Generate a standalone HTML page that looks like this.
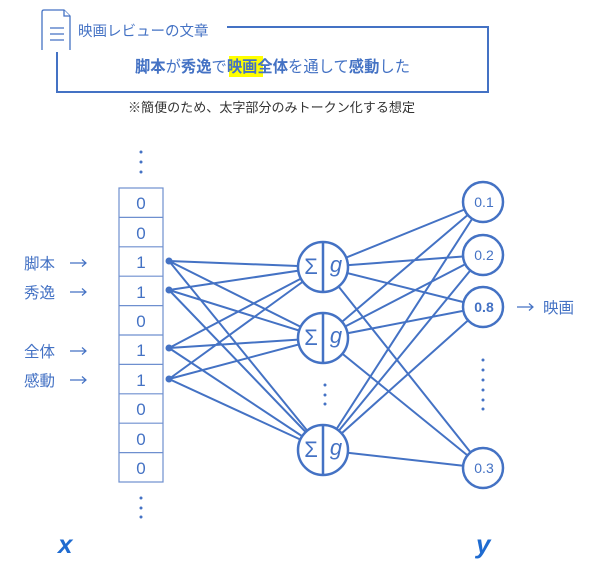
<!DOCTYPE html>
<html><head><meta charset="utf-8"><style>
body{margin:0;background:#fff;width:597px;height:568px;overflow:hidden}
svg{display:block}
text{font-family:"Liberation Sans","Noto Sans CJK JP",sans-serif;fill:#4472C4}
</style></head><body>
<svg width="597" height="568" viewBox="0 0 597 568">
<g fill="none" stroke="#4472C4" stroke-width="2">
<path d="M227 27H488V92H57V52"/>
</g>
<g fill="#fff" stroke="#4472C4" stroke-width="1.3">
<path d="M42 50V12Q42 10 44 10H64L70 16V50"/>
<path d="M64 10V16H70"/>
<path d="M50 28H64M50 34H64M50 40H64" />
</g>
<text x="78" y="36" font-size="14.5">映画レビューの文章</text>
<rect x="229" y="56" width="34" height="21" fill="#FFFF00"/>
<text x="135" y="72" font-size="16" textLength="275" lengthAdjust="spacingAndGlyphs"><tspan font-weight="bold">脚本</tspan>が<tspan font-weight="bold">秀逸</tspan>で<tspan font-weight="bold">映画全体</tspan>を通して<tspan font-weight="bold">感動</tspan>した</text>
<text x="128" y="112" font-size="13" textLength="287" lengthAdjust="spacingAndGlyphs" style="fill:#333">※簡便のため、太字部分のみトークン化する想定</text>

<g fill="none" stroke="#6E8FCF" stroke-width="1.2">
<rect x="119" y="188" width="44" height="294"/>
<path d="M119 217.4H163M119 246.8H163M119 276.2H163M119 305.6H163M119 335H163M119 364.4H163M119 393.8H163M119 423.2H163M119 452.6H163"/>
</g>
<g font-size="17" text-anchor="middle" style="font-family:'DejaVu Sans',sans-serif;font-weight:300">
<text x="141" y="209">0</text><text x="141" y="239">0</text><text x="141" y="268">1</text><text x="141" y="298">1</text><text x="141" y="327">0</text><text x="141" y="356">1</text><text x="141" y="386">1</text><text x="141" y="415">0</text><text x="141" y="445">0</text><text x="141" y="474">0</text>
</g>
<g fill="#4472C4"><circle cx="141" cy="152" r="1.5"/><circle cx="141" cy="162" r="1.5"/><circle cx="141" cy="172" r="1.5"/>
<circle cx="141" cy="498" r="1.5"/><circle cx="141" cy="508" r="1.5"/><circle cx="141" cy="517" r="1.5"/>
<circle cx="325" cy="385" r="1.5"/><circle cx="325" cy="395" r="1.5"/><circle cx="325" cy="404" r="1.5"/>
<circle cx="483" cy="360" r="1.5"/><circle cx="483" cy="370" r="1.5"/><circle cx="483" cy="380" r="1.5"/><circle cx="483" cy="390" r="1.5"/><circle cx="483" cy="400" r="1.5"/><circle cx="483" cy="409" r="1.5"/>
</g>
<g font-size="15.5">
<text x="24" y="269">脚本</text><text x="24" y="298">秀逸</text><text x="24" y="357">全体</text><text x="24" y="386">感動</text>
<text x="543" y="313">映画</text>
</g>
<g stroke="#4472C4" stroke-width="1.2" fill="none">
<path d="M70 263H86M82 259.5L86 263L82 266.5M70 292H86M82 288.5L86 292L82 295.5M70 351H86M82 347.5L86 351L82 354.5M70 380H86M82 376.5L86 380L82 383.5M517 307H533M529 303.5L533 307L529 310.5"/>
</g>

<g stroke="#4472C4" stroke-width="2">
<path d="M169 261L323 267M169 261L323 338M169 261L323 450M169 290L323 267M169 290L323 338M169 290L323 450M169 348L323 267M169 348L323 338M169 348L323 450M169 379L323 267M169 379L323 338M169 379L323 450"/>
<path d="M323 267L483 202M323 267L483 255M323 267L483 307M323 267L483 468M323 338L483 202M323 338L483 255M323 338L483 307M323 338L483 468M323 450L483 202M323 450L483 255M323 450L483 307M323 450L483 468"/>
</g>
<g fill="#4472C4"><circle cx="169" cy="261" r="3.5"/><circle cx="169" cy="290" r="3.5"/><circle cx="169" cy="348" r="3.5"/><circle cx="169" cy="379" r="3.5"/></g>

<g fill="#fff" stroke="#4472C4" stroke-width="2.5">
<circle cx="323" cy="267" r="25"/><circle cx="323" cy="338" r="25"/><circle cx="323" cy="450" r="25"/>
<path d="M323 242V292M323 313V363M323 425V475"/>
<circle cx="483" cy="202" r="20"/><circle cx="483" cy="255" r="20"/><circle cx="483" cy="307" r="20"/><circle cx="483" cy="468" r="20"/>
</g>
<g font-size="22" style="font-family:'Liberation Serif',serif" text-anchor="middle">
<text x="311" y="274">Σ</text><text x="336" y="272" font-style="italic">g</text>
<text x="311" y="345">Σ</text><text x="336" y="343" font-style="italic">g</text>
<text x="311" y="457">Σ</text><text x="336" y="455" font-style="italic">g</text>
</g>
<g font-size="14" text-anchor="middle">
<text x="484" y="207">0.1</text><text x="484" y="260">0.2</text><text x="484" y="312" font-weight="bold">0.8</text><text x="484" y="473">0.3</text>
</g>
<g font-size="26" font-weight="bold" font-style="italic" style="font-family:'Liberation Serif',serif">
<text x="58" y="553" style="fill:#1F6BD0">x</text><text x="476" y="553" style="fill:#1F6BD0">y</text>
</g>
</svg>
</body></html>
